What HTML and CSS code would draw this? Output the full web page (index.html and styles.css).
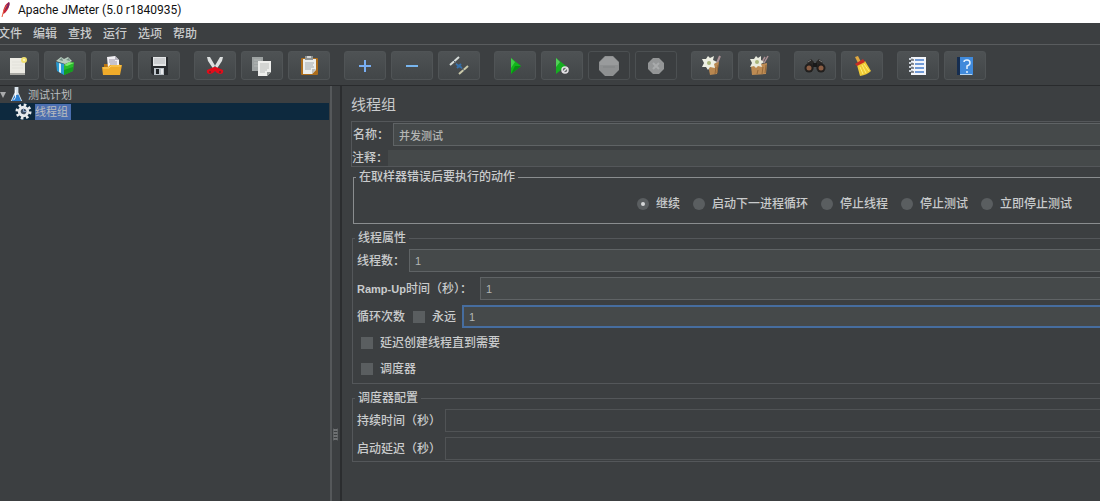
FILE: index.html
```html
<!DOCTYPE html>
<html lang="zh-CN">
<head>
<meta charset="utf-8">
<title>Apache JMeter (5.0 r1840935)</title>
<link rel="stylesheet" href="styles.css">
</head>
<body>
<div class="window">
  <header class="titlebar">
    <svg class="feather" viewBox="0 0 12 18" aria-hidden="true"><path d="M9 1C5 3 3 8 3 13L5 12C8 9 10 5 9 1Z" fill="#c4243c"/><path d="M9 1C6 4 5 7 5 9L8 7C10 4 10 2 9 1Z" fill="#7c2463"/><path d="M7 4Q3 9 2 16" stroke="#e8573a" fill="none"/></svg>
    <span>Apache JMeter (5.0 r1840935)</span>
  </header>
  <nav class="menubar">
    <button class="menu">文件</button><button class="menu">编辑</button><button class="menu">查找</button><button class="menu">运行</button><button class="menu">选项</button><button class="menu">帮助</button>
  </nav>
  <div class="toolbar" role="toolbar">
    <div class="group">
      <button class="tool" aria-label="新建"><svg viewBox="0 0 22 22"><path d="M3 3H18V19H3Z" fill="#ecebe4"/><path d="M3 18H18V20H3Z" fill="#a9a9a4"/><path d="M5 7H16M5 10H16M5 13H16" stroke="#e2e1da"/><circle cx="17" cy="5" r="3" fill="#f0e070"/><circle cx="17" cy="5" r="1" fill="#fffbd0"/></svg></button>
      <button class="tool" aria-label="模板"><svg viewBox="0 0 22 22"><path d="M2 6L7 2L10 4L14 2L18 6L11 9Z" fill="#b9cdbf"/><path d="M5 5L8 3L9 6ZM12 5L15 3L16 6Z" fill="#738d83"/><path d="M2 7L10 9V20L3 16Z" fill="#289bd3"/><path d="M5 8L7 9V18L5 17Z" fill="#d8f1f4"/><path d="M10 10L20 7L19 16L10 20Z" fill="#28bd2b"/><path d="M10 10L15 7L20 8L13 11Z" fill="#7ee96f"/><path d="M10 15L19 12V16L10 20Z" fill="#159e20"/></svg></button>
      <button class="tool" aria-label="打开"><svg viewBox="0 0 22 22"><path d="M3 9H19V19H3Z" fill="#b97512"/><path d="M6 2L14 1L18 5V13H7Z" fill="#f2f0f4"/><path d="M8 5H14M8 7H16M9 9H16" stroke="#9a95a5"/><path d="M14 1V5H18" fill="#b8b5c0"/><path d="M1 12H7L9 10H21L19 20H2Z" fill="#efab2a"/><path d="M2 13H8L10 11H20" stroke="#ffd263" fill="none"/></svg></button>
      <button class="tool" aria-label="保存"><svg viewBox="0 0 22 22"><path d="M3 2H20V20H5L3 18Z" fill="#292c2f"/><path d="M5 2H18V11H5Z" fill="#e4e6e7"/><path d="M6 4H17M6 6H17M6 8H17" stroke="#b4b7ba"/><path d="M6 13H16V20H6Z" fill="#bbc2c8"/><path d="M8 14H11V19H8Z" fill="#202427"/><path d="M13 14H15V19H13Z" fill="#e8eaec"/></svg></button>
    </div>
    <div class="group">
      <button class="tool" aria-label="剪切"><svg viewBox="0 0 22 22"><path d="M3 2L6 2L13 14L10 15L4 6ZM19 2L16 2L9 14L12 15L18 6Z" fill="#dcdfdf"/><path d="M10 12L12 12L19 15Q20 19 16 19Q13 19 11 16Q9 19 6 19Q2 19 3 15Z" fill="#e10c1a"/><circle cx="6" cy="17" r="1" fill="#6d2528"/><circle cx="16" cy="17" r="1" fill="#6d2528"/></svg></button>
      <button class="tool" aria-label="复制"><svg viewBox="0 0 22 22"><path d="M1 2H12V16H1Z" fill="#9da2a2"/><path d="M3 5H10M3 8H10M3 11H10" stroke="#b2b6b5"/><path d="M7 6H20V17L16 21H7Z" fill="#edeeec"/><path d="M9 9H18M9 11H18M9 13H18M9 15H16M9 17H14" stroke="#b9bcba"/><path d="M20 17H16V21Z" fill="#939896"/></svg></button>
      <button class="tool" aria-label="粘贴"><svg viewBox="0 0 22 22"><rect x="3" y="3" width="17" height="17" rx="1" fill="#ac6d1c"/><path d="M5 4H18V15L14 19H5Z" fill="#eceeed"/><path d="M7 1H15V5H7Z" fill="#8d9292"/><path d="M9 1H13V3H9Z" fill="#d1d3d3"/><path d="M7 8H16M7 10H15M7 12H16M7 14H13" stroke="#a2a9ad"/><path d="M18 14L14 14V19Z" fill="#bcbfbd"/></svg></button>
    </div>
    <div class="group">
      <button class="tool" aria-label="展开"><svg viewBox="0 0 22 22"><path d="M11 5V17M5 11H17" stroke="#78aef2" stroke-width="2"/></svg></button>
      <button class="tool" aria-label="折叠"><svg viewBox="0 0 22 22"><path d="M5 11H17" stroke="#78b5ee" stroke-width="2"/></svg></button>
      <button class="tool" aria-label="切换"><svg viewBox="0 0 22 22"><path d="M2 10L11 2" stroke="#d7ddda" stroke-width="2"/><path d="M11 19L20 11" stroke="#c9c8a9" stroke-width="2"/><path d="M5 5L9 9M13 13L17 16" stroke="#55616c"/><path d="M8 9L14 13M9 13L13 9" stroke="#3570aa" stroke-width="2"/></svg></button>
    </div>
    <div class="group">
      <button class="tool" aria-label="启动"><svg viewBox="0 0 22 22"><path d="M7 3L17 11L7 19Z" fill="#12b51b"/><path d="M7 3L11 7L7 13Z" fill="#42cd48"/><path d="M7 19L17 11H11Z" fill="#078e13"/></svg></button>
      <button class="tool" aria-label="不停顿开始"><svg viewBox="0 0 22 22"><path d="M5 3L15 11L5 19Z" fill="#16ae21"/><path d="M5 3L9 7L5 12Z" fill="#53ce58"/><circle cx="14" cy="15" r="3" fill="#656b6b" stroke="#e4e1e5" stroke-width="1.500"/><path d="M12 17L16 13" stroke="#e4e1e5" stroke-width="1.500"/></svg></button>
      <button class="tool" aria-label="停止" disabled><svg viewBox="0 0 22 22"><path d="M7 1H15L21 7V15L15 21H7L1 15V7Z" fill="#8e9091"/><path d="M7 2H15L20 7V10H2V7Z" fill="#999b9c"/><path d="M5 12H17" stroke="#818485"/></svg></button>
      <button class="tool" aria-label="关闭" disabled><svg viewBox="0 0 22 22"><path d="M8 3H14L19 8V14L14 19H8L3 14V8Z" fill="#939596"/><path d="M8 8L14 14M14 8L8 14" stroke="#a9abac" stroke-width="2"/></svg></button>
    </div>
    <div class="group">
      <button class="tool" aria-label="清除"><svg viewBox="0 0 22 22"><path d="M16 8L19 1" stroke="#aa9094" stroke-width="2"/><path d="M7 10L18 7L16 19L9 20Z" fill="#b88750"/><path d="M15 12L14 19M17 10L16 18" stroke="#94683a"/><path d="M7 1L9 3L13 1L12 5L16 7L13 9L14 13L9 12L7 15L5 12L1 12L3 8L1 4L5 4Z" fill="#eef0e4"/><circle cx="8" cy="8" r="2" fill="#a9b67a"/></svg></button>
      <button class="tool" aria-label="清除全部"><svg viewBox="0 0 22 22"><path d="M16 8L20 1M14 7L17 2" stroke="#aa9094" stroke-width="1.500"/><path d="M3 11L19 8L18 19L4 20Z" fill="#bd8b53"/><path d="M15 12L14 19M10 15L9 19M18 10L17 18" stroke="#94683a"/><path d="M8 1L10 3L13 1L13 5L16 7L13 9L14 12L10 11L8 13L6 11L2 12L4 8L2 4L6 4Z" fill="#eaecdf"/><circle cx="9" cy="7" r="2" fill="#a9b67a"/></svg></button>
    </div>
    <div class="group">
      <button class="tool" aria-label="查找"><svg viewBox="0 0 22 22"><path d="M4 6L7 4L10 7L9 15H2ZM18 6L15 4L12 7L13 15H20Z" fill="#292725"/><path d="M9 8H13V12H9Z" fill="#191919"/><circle cx="5" cy="13" r="4.500" fill="#211f1e"/><circle cx="17" cy="13" r="4.500" fill="#211f1e"/><circle cx="5" cy="13" r="2.500" fill="#8b5d43"/><circle cx="17" cy="13" r="2.500" fill="#8b5d43"/><path d="M4 7L7 5M15 5L18 7" stroke="#7c7c7c"/></svg></button>
      <button class="tool" aria-label="清除查找"><svg viewBox="0 0 22 22"><path d="M4 2L7 1L10 7L7 8Z" fill="#e0a840"/><path d="M6 10L14 6L20 16Q16 20 9 21Z" fill="#f0cb35"/><path d="M9 12L12 19M11 10L15 18M13 9L18 16" stroke="#fff078"/><path d="M4 9L12 4L14 7L6 11Z" fill="#c82d23"/></svg></button>
    </div>
    <div class="group">
      <button class="tool" aria-label="函数助手"><svg viewBox="0 0 22 22"><path d="M4 2H19V20H4Z" fill="#f3f5fa"/><path d="M8 5H17M8 9H17M8 13H17M8 17H17" stroke="#477dcb" stroke-width="1.500"/><path d="M2 4H6M2 8H6M2 12H6M2 16H6" stroke="#cbd1d8" stroke-width="2"/><path d="M4 5H7M4 9H7M4 13H7M4 17H7" stroke="#20252b"/></svg></button>
      <button class="tool" aria-label="帮助"><svg viewBox="0 0 22 22"><path d="M3 2H7V20H3Z" fill="#152d50"/><path d="M6 2H19V20H6Z" fill="#408adb"/><path d="M6 19H18V20H6Z" fill="#b9d5ec"/><path d="M10 7Q10 5 13 5Q16 5 16 8Q16 10 13 11V14" fill="none" stroke="#e1f1ff" stroke-width="1.500"/><circle cx="13" cy="17" r="1" fill="#e1f1ff"/></svg></button>
    </div>
  </div>
  <div class="workspace">
    <aside class="tree" role="tree">
      <div class="node" role="treeitem"><svg class="arrow" viewBox="0 0 8 8"><path d="M0 1H6L3 7Z" fill="#a9abac"/></svg><svg class="node-icon" viewBox="0 0 18 18"><path d="M7 1H11V7L15 16H3L7 7Z" fill="#d9e4ec"/><path d="M7 10L11 9L14 16H4Z" fill="#2c7fd0"/><path d="M8 4V12L6 15" stroke="#fff" fill="none"/></svg><span class="node-text">测试计划</span></div>
      <div class="node selected child" role="treeitem" aria-selected="true"><svg class="node-icon" viewBox="0 0 18 18"><circle cx="9" cy="9" r="7" fill="none" stroke="#e8ebed" stroke-width="3" stroke-dasharray="2.750 2.750"/><circle cx="9" cy="9" r="4.500" fill="#3d4d61" stroke="#e8ebed" stroke-width="3"/><path d="M9 6V9H12" stroke="#8aa6ca" fill="none"/></svg><span class="node-text">线程组</span></div>
    </aside>
    <div class="splitter"><svg viewBox="0 0 6 14" aria-hidden="true"><path d="M0 1L5 3M0 4L5 6M0 7L5 9M0 10L5 12M0 3L5 1M0 6L5 4M0 9L5 7M0 12L5 10" stroke="#9a9d9f" stroke-width=".6"/></svg></div>
    <main class="editor">
      <h1>线程组</h1>
      <section class="identity">
        <div class="row"><label class="name-label" for="name">名称：</label><input class="field" id="name" value="并发测试"></div>
        <div class="row comment"><label class="comment-label" for="comment">注释：</label><input class="field plain" id="comment"></div>
      </section>
      <fieldset class="errors">
        <legend>在取样器错误后要执行的动作</legend>
        <div class="choices">
          <label class="choice"><input type="radio" name="action" checked>继续</label>
          <label class="choice"><input type="radio" name="action">启动下一进程循环</label>
          <label class="choice"><input type="radio" name="action">停止线程</label>
          <label class="choice"><input type="radio" name="action">停止测试</label>
          <label class="choice"><input type="radio" name="action">立即停止测试</label>
        </div>
      </fieldset>
      <fieldset class="threads">
        <legend>线程属性</legend>
        <div class="rows">
          <div class="row"><label class="threads-label" for="threads">线程数：</label><input class="field" id="threads" value="1"></div>
          <div class="row"><label class="ramp-label" for="ramp"><span class="latin">Ramp-Up</span>时间（秒）：</label><input class="field" id="ramp" value="1"></div>
          <div class="row"><label class="loop-label" for="loops">循环次数</label><label class="choice forever"><input type="checkbox">永远</label><input class="field focused" id="loops" value="1"></div>
        </div>
        <div class="checks">
          <label class="choice"><input type="checkbox">延迟创建线程直到需要</label>
          <label class="choice"><input type="checkbox">调度器</label>
        </div>
      </fieldset>
      <fieldset class="scheduler">
        <legend>调度器配置</legend>
        <div class="rows">
          <div class="row"><label class="time-label" for="duration">持续时间（秒）</label><input class="field off" id="duration" disabled></div>
          <div class="row"><label class="time-label" for="delay">启动延迟（秒）</label><input class="field off" id="delay" disabled></div>
        </div>
      </fieldset>
    </main>
  </div>
</div>
</body>
</html>
```
FILE: styles.css
```css
* { box-sizing: border-box; }
body {
  margin: 0;
  background: #3c3f41;
  color: #c9cbcc;
  font: 500 12px/16px "Liberation Sans", "Noto Sans CJK SC", sans-serif;
}
button, input { font: inherit; color: inherit; }
.window { display: flex; flex-direction: column; min-height: 100vh; overflow: hidden; }
.titlebar {
  display: flex;
  align-items: center;
  gap: 6px;
  height: 23px;
  padding: 0 0 4px;
  background: #fff;
  color: #111;
  font: 12px/16px Roboto, sans-serif;
}
.feather { width: 12px; height: 18px; }
.menubar {
  display: flex;
  gap: 11px;
  height: 22px;
  margin-left: -2px;
  border-bottom: 1px solid #595c5e;
}
.menu { padding: 0; border: 0; background: none; white-space: nowrap; }
.toolbar {
  display: flex;
  gap: 14px;
  padding: 6px 0 5px;
  margin-left: -3px;
  border-bottom: 1px solid #292b2d;
}
.group { display: flex; gap: 5px; }
.tool {
  display: grid;
  place-items: center;
  width: 42px;
  height: 29px;
  padding: 0;
  border: 1px solid #505456;
  border-radius: 3px;
  background: linear-gradient(#4e5254, #424648);
}
.tool:disabled { background: #3b3e40; border-color: #4c5052; }
.tool svg { width: 22px; height: 22px; }
.workspace { display: flex; flex: 1; }
.tree { flex: 0 0 30%; border-right: 1px solid #3c3f41; }
.node { display: flex; align-items: center; height: 17px; font-size: 11px; }
.arrow { width: 8px; height: 8px; }
.node-icon { width: 17px; height: 17px; }
.node-text { padding: 0 3px; white-space: nowrap; font-weight: 400; color: #bbbdbf; }
.child { padding-left: 15px; }
.child .node-icon { margin-right: 3px; }
.selected { background: #0d293e; }
.selected .node-text { padding: 0 3px 0 0; background: #4b6eaf; }
.splitter {
  display: grid;
  place-items: start center;
  flex: 0 0 12px;
  padding-top: 342px;
  border-left: 2px solid #55585a;
  border-right: 2px solid #2b2d2f;
}
.splitter svg { width: 6px; height: 14px; }
.editor { flex: 1; min-width: 0; padding: 9px 0 0 9px; }
h1 { margin: 0 0 6px; font-size: 15px; line-height: 20px; font-weight: 400; }
.identity { padding-top: 1px; border: 1px solid #54575a; border-right: 0; }
.row { display: flex; align-items: center; white-space: nowrap; }
.row > label { flex: none; }
.comment { margin-top: 4px; }
.name-label { width: 41px; padding-left: 1px; }
.comment-label { width: 36px; }
.field {
  flex: 1;
  min-width: 0;
  height: 23px;
  padding: 0 5px;
  border: 1px solid #5f6365;
  border-right: 0;
  border-radius: 0;
  outline: 0;
  background: #45494a;
  color: #b4b6b5;
  font-size: 11px;
}
.plain { height: 16px; border: 0; }
.off { background: #3c3f41; border-color: #505355; }
.focused { border: 2px solid #466d9f; border-right: 0; }
fieldset { min-width: 0; margin: 0; padding: 0; border: 1px solid #54575a; border-right: 0; }
legend { height: 16px; margin-left: 2px; padding: 0 3px; }
.errors { margin: 2px 0 0 2px; border-color: #8a8d8f; }
.choices { display: flex; justify-content: flex-end; gap: 13px; padding: 11px 28px 11px 0; }
.choice { display: flex; align-items: center; gap: 7px; white-space: nowrap; }
.choice input {
  appearance: none;
  display: grid;
  place-items: center;
  width: 12px;
  height: 12px;
  margin: 0;
  background: #5a5e60;
}
.choice input[type="radio"] { border-radius: 50%; }
.choice input[type="radio"]:checked::before {
  content: "";
  width: 4px;
  height: 4px;
  border-radius: 50%;
  background: #d5d7d8;
}
.threads, .scheduler { margin: 6px 0 0 1px; }
.rows { display: flex; flex-direction: column; gap: 5px; padding: 3px 0 1px 4px; }
.threads-label { width: 52px; }
.ramp-label { width: 123px; }
.latin { font-size: 11px; font-weight: 700; }
.loop-label { width: 56px; }
.forever { width: 49px; }
.time-label { width: 88px; }
.checks { display: grid; gap: 10px; padding: 6px 0 6px 8px; }
```
